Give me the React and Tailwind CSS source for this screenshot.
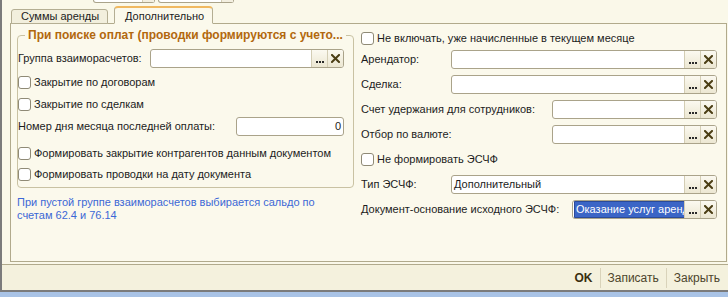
import { useState } from 'react';

const font = "font-['Liberation_Sans',Arial,sans-serif]";

const Checkbox = ({ checked = false }) => (
  <span className="w-[13px] h-[13px] shrink-0 rounded-[3px] border border-[#8f8a76] bg-white flex items-center justify-center">
    {checked && <span className="text-[10px] leading-none">✓</span>}
  </span>
);

const CheckRow = ({ label, className = '' }) => (
  <div className={`h-[19px] flex items-center gap-[3px] ${className}`}>
    <Checkbox />
    <span className="whitespace-nowrap">{label}</span>
  </div>
);

const ClearIcon = () => (
  <svg width="9" height="9" viewBox="0 0 9 9">
    <path d="M1 1 L8 8 M8 1 L1 8" stroke="#4b3e14" strokeWidth="2" strokeLinecap="square" />
  </svg>
);

const Dots = () => (
  <div className="flex gap-[1px]">
    <span className="w-[2px] h-[2px] bg-[#2a2a2a]" />
    <span className="w-[2px] h-[2px] bg-[#2a2a2a]" />
    <span className="w-[2px] h-[2px] bg-[#2a2a2a]" />
  </div>
);

const Field = ({ width, value, selected = false, align = 'left', buttons = true }) => (
  <div
    className={`h-[19px] flex border border-[#aaa38a] rounded-[3px] bg-white overflow-hidden ${width}`}
  >
    <div className={`flex-1 min-w-0 flex items-center px-[2px] overflow-hidden ${align === 'right' ? 'justify-end' : ''}`}>
      {value && (
        <span
          className={`whitespace-nowrap leading-[15px] ${
            selected ? 'bg-[#3b65c6] text-white px-px outline outline-1 outline-[#2a4a9a]' : ''
          }`}
        >
          {value}
        </span>
      )}
    </div>
    {buttons && (
      <>
        <div className="w-[16px] shrink-0 border-l border-[#d3cdb4] bg-gradient-to-b from-[#fbf9f0] to-[#ece7d2] flex items-end justify-center pb-[4px]">
          <Dots />
        </div>
        <div className="w-[16px] shrink-0 border-l border-[#d3cdb4] bg-gradient-to-b from-[#fbf9f0] to-[#ece7d2] flex items-center justify-center">
          <ClearIcon />
        </div>
      </>
    )}
  </div>
);

const LabeledField = ({ label, labelWidth, ...rest }) => (
  <div className="h-[19px] flex items-center">
    <span className={`whitespace-nowrap shrink-0 ${labelWidth}`}>{label}</span>
    <Field {...rest} />
  </div>
);

export default function App() {
  const [tab, setTab] = useState('extra');

  return (
    <div className={`w-[728px] h-[297px] overflow-hidden bg-[#a9c3e6] text-[11px] text-[#1c1c1c] ${font}`}>
      <div className="h-[292px] flex flex-col border-l-2 border-b-2 border-[#7b7b7b] bg-[#f8f6e6]">
        <div className="h-[265px] flex flex-col border-b border-[#b1aa8c] bg-[#faf8e9]">
          {/* bottoms of the fields above */}
          <div className="h-[5px] flex items-start">
            <div className="ml-[91px] w-[62px] h-[3px] flex border-x border-b border-[#aaa38a] rounded-b-[3px] bg-white">
              <div className="ml-auto w-[12px] border-l border-[#d3cdb4] bg-[#f3efe0]" />
            </div>
            <div className="ml-[3px] w-[76px] h-[3px] flex border-x border-b border-[#aaa38a] rounded-b-[3px] bg-white">
              <div className="ml-auto w-[12px] border-l border-[#d3cdb4] bg-[#f3efe0]" />
            </div>
          </div>

          {/* tabs */}
          <div className="h-[18px] flex items-end pl-[9px] relative z-10">
            <button
              onClick={() => setTab('sum')}
              className={`h-[15px] w-[97px] -mb-px flex items-center pl-[9px] border border-[#b4ae93] rounded-t-[3px] ${
                tab === 'sum' ? 'bg-[#fbf9ec] border-b-[#fbf9ec]' : 'bg-[#f2efdd]'
              }`}
            >
              Суммы аренды
            </button>
            <button
              onClick={() => setTab('extra')}
              className={`ml-[6px] h-[18px] w-[99px] -mb-px flex items-center pl-[10px] pt-[1px] border border-[#b4ae93] border-t-2 border-t-[#f0b860] rounded-t-[4px] ${
                tab === 'extra' ? 'bg-[#fbf9ec] border-b-[#fbf9ec]' : 'bg-[#f2efdd]'
              }`}
            >
              Дополнительно
            </button>
          </div>

          {/* tab panel */}
          <div className="ml-[8px] mr-[1px] h-[239px] border border-[#b1aa8c] bg-[#fbf9ec] flex pl-[6px]">
            <div className="w-[337px] flex flex-col">
              <div className="mt-[11px] h-[153px] relative border border-[#c9c2a3] rounded-[4px] flex flex-col pr-[9px]">
                <span className="absolute -top-[8px] left-[7px] px-[3px] bg-[#fbf9ec] text-[12px] font-bold text-[#b2680e] whitespace-nowrap leading-[14px]">
                  При поиске оплат (проводки формируются с учето...
                </span>
                <div className="mt-[13px]">
                  <LabeledField label="Группа взаиморасчетов:" labelWidth="w-[132px]" width="flex-1" />
                </div>
                <CheckRow className="mt-[5px]" label="Закрытие по договорам" />
                <CheckRow className="mt-[3px]" label="Закрытие по сделкам" />
                <div className="mt-[3px] h-[19px] flex items-center">
                  <span className="whitespace-nowrap w-[218px] shrink-0">Номер дня месяца последней оплаты:</span>
                  <Field width="flex-1" value="0" align="right" buttons={false} />
                </div>
                <CheckRow className="mt-[8px]" label="Формировать закрытие контрагентов данным документом" />
                <CheckRow className="mt-[2px]" label="Формировать проводки на дату документа" />
              </div>
              <p className="mt-[8px] text-[#3b68d6] leading-[13px] pr-[14px]">
                При пустой группе взаиморасчетов выбирается сальдо по счетам 62.4 и 76.14
              </p>
            </div>

            <div className="ml-[7px] w-[356px] flex flex-col">
              <CheckRow className="mt-[5px]" label="Не включать, уже начисленные в текущем месяце" />
              <div className="mt-[2px] flex flex-col gap-[6px]">
                <LabeledField label="Арендатор:" labelWidth="w-[90px]" width="flex-1" />
                <LabeledField label="Сделка:" labelWidth="w-[90px]" width="flex-1" />
                <LabeledField label="Счет удержания для сотрудников:" labelWidth="w-[191px]" width="flex-1" />
                <LabeledField label="Отбор по валюте:" labelWidth="w-[191px]" width="flex-1" />
                <CheckRow label="Не формировать ЭСЧФ" />
                <LabeledField label="Тип ЭСЧФ:" labelWidth="w-[90px]" width="flex-1" value="Дополнительный" />
                <LabeledField
                  label="Документ-основание исходного ЭСЧФ:"
                  labelWidth="w-[211px]"
                  width="flex-1"
                  value="Оказание услуг аренды"
                  selected
                />
              </div>
            </div>
          </div>
        </div>

        {/* command bar */}
        <div className="flex-1 bg-[#f4f1dd] flex items-center justify-end pr-[8px] text-[12px]">
          <button className="font-bold text-[#3a2f0e] px-[7px]">OK</button>
          <span className="w-px h-[20px] bg-[#d9d3ba]" />
          <button className="text-[#4d452c] px-[7px]">Записать</button>
          <span className="w-px h-[20px] bg-[#d9d3ba]" />
          <button className="text-[#4d452c] pl-[7px]">Закрыть</button>
        </div>
      </div>
    </div>
  );
}
